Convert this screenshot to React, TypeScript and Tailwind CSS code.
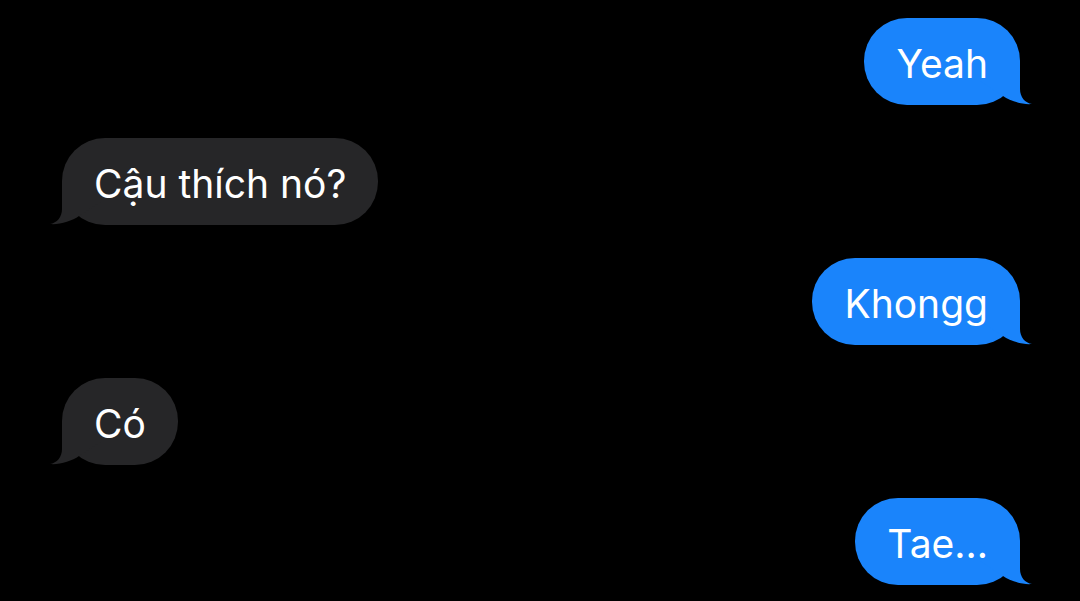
import React from "react";

type Msg = { text: string; me: boolean };

const msgs: Msg[] = [
  { text: "Yeah", me: true },
  { text: "Cậu thích nó?", me: false },
  { text: "Khongg", me: true },
  { text: "Có", me: false },
  { text: "Tae...", me: true },
];

function Tail({ me }: { me: boolean }) {
  const color = me ? "#1a84fb" : "#262628";
  if (me) {
    return (
      <svg
        className="absolute right-[-12px] bottom-0"
        width="52"
        height="44"
        viewBox="0 0 52 44"
      >
        <path
          d="M0 0 L40 0 L40 28 C40 36 45 42 52 43 C43 44 30 40 23 35 L0 20 Z"
          fill={color}
        />
      </svg>
    );
  }
  return (
    <svg
      className="absolute left-[-12px] bottom-0"
      width="52"
      height="44"
      viewBox="0 0 52 44"
    >
      <path
        d="M52 0 L12 0 L12 28 C12 36 7 42 0 43 C9 44 22 40 29 35 L52 20 Z"
        fill={color}
      />
    </svg>
  );
}

function Bubble({ m }: { m: Msg }) {
  return (
    <div className={`flex ${m.me ? "justify-end" : "justify-start"}`}>
      <div
        className={`relative h-[87px] flex items-center rounded-[43px] px-[32px] text-white text-[39px] leading-none ${
          m.me ? "bg-[#1a84fb]" : "bg-[#262628]"
        }`}
      >
        <Tail me={m.me} />
        <span className="relative pt-[3px]">{m.text}</span>
      </div>
    </div>
  );
}

export default function App() {
  return (
    <div
      className="w-[1080px] h-[601px] bg-black overflow-hidden flex flex-col gap-[33px] pt-[18px] pl-[62px] pr-[60px]"
      style={{ fontFamily: "Inter, 'Noto Sans', sans-serif" }}
    >
      {msgs.map((m, i) => (
        <Bubble key={i} m={m} />
      ))}
    </div>
  );
}
